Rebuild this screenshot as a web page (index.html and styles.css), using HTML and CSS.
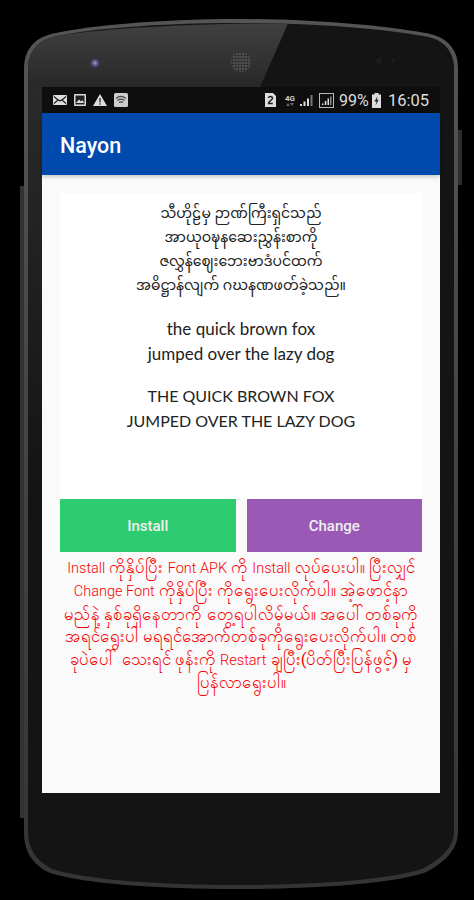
FILE: index.html
```html
<!DOCTYPE html>
<html lang="my">
<head>
<meta charset="utf-8">
<title>Nayon</title>
<link rel="stylesheet" href="styles.css">
</head>
<body>
<div class="phone">
  <svg class="shell" width="474" height="900" viewBox="0 0 474 900" aria-hidden="true">
    <defs>
      <linearGradient id="glare" x1="0" y1="0" x2="0" y2="1"><stop offset="0" stop-color="#404040"/><stop offset="1" stop-color="#282828"/></linearGradient>
      <linearGradient id="rim" x1="0" y1="0" x2="0" y2="1"><stop offset="0" stop-color="#555"/><stop offset=".5" stop-color="#444"/><stop offset="1" stop-color="#343434"/></linearGradient>
      <linearGradient id="band" x1="0" y1="0" x2="0" y2="1"><stop offset="0" stop-color="#2a2a2a"/><stop offset="1" stop-color="#141414"/></linearGradient>
      <radialGradient id="lens"><stop offset="0" stop-color="#a0a0c8"/><stop offset=".55" stop-color="#44446c"/><stop offset="1" stop-color="#2a2a30"/></radialGradient>
      <pattern id="mesh" width="3" height="3" patternUnits="userSpaceOnUse"><rect width="3" height="3" fill="#4a4a4a"/><circle cx="1.5" cy="1.5" r=".8" fill="#1c1c1c"/></pattern>
    </defs>
    <rect x="458" y="130" width="4" height="55" fill="#2c2c2c"/>
    <rect x="20" y="186" width="5" height="632" fill="#333"/>
    <path d="M237 19C160 19 80 26 48 35C32 40 24 52 24 68V832C24 850 31 864 50 873C85 884 160 889 237 889C314 889 389 884 424 873C443 864 458 850 458 832V68C458 52 450 40 434 35C394 26 314 19 237 19Z" fill="url(#rim)"/>
    <path d="M237 23C160 23 82 29 50 38C36 42 28 54 28 68V832C28 848 35 860 52 869C87 880 160 885 237 885C314 885 387 880 422 869C439 860 454 848 454 832V68C454 54 446 42 432 38C392 29 314 23 237 23Z" fill="#141414"/>
    <rect x="28" y="87" width="14" height="400" fill="url(#band)"/>
    <path d="M288 23.500C200 23 82 29 50 38C36 42 28 54 28 68V87H260Z" fill="url(#glare)"/>
    <circle cx="95" cy="63" r="6" fill="url(#lens)"/>
    <circle cx="241" cy="62" r="10.500" fill="url(#mesh)" stroke="#333" stroke-width="1"/>
    <circle cx="379" cy="61" r="3" fill="#1d1d1d"/><circle cx="393" cy="61" r="2" fill="#1d1d1d"/>
  </svg>
  <div class="screen">
    <header class="statusbar">
      <div class="status-left">
        <svg width="14" height="10" viewBox="0 0 14 10"><rect width="14" height="10" rx="1" fill="#ddd"/><path d="M1 1.500L5 5L1 8.500M13 1.500L9 5L13 8.500M4 4L7 6L10 4" fill="none" stroke="#222" stroke-width="1.200"/></svg>
        <svg width="12" height="12" viewBox="0 0 12 12"><rect width="12" height="12" rx="1" fill="#ddd"/><rect x="1.500" y="1.500" width="9" height="9" fill="#222"/><path d="M2 9L5 5.500L7 7.500L8.500 6L10 9Z" fill="#ddd"/></svg>
        <svg width="14" height="12" viewBox="0 0 14 12"><path d="M7 0L14 12H0Z" fill="#ddd"/><rect x="6.300" y="4" width="1.400" height="4.500" fill="#333"/><rect x="6.300" y="9.300" width="1.400" height="1.400" fill="#333"/></svg>
        <svg width="14" height="14" viewBox="0 0 14 14"><rect width="14" height="14" rx="1.500" fill="#ccc"/><path d="M2 5.500C5 3 9 3 12 5.500M3.500 7.500C5.500 6 8.500 6 10.500 7.500M5 9.500C6.200 8.700 7.800 8.700 9 9.500" fill="none" stroke="#444" stroke-width="1.100"/></svg>
      </div>
      <div class="status-right">
        <svg class="sim" width="11" height="14" viewBox="0 0 11 14"><path d="M0 0H8L11 3V14H0Z" fill="#ddd"/><path d="M3.500 5C3.800 3 7.500 3 7.500 5.200C7.500 7 3.500 8 3.500 10.500H7.800" fill="none" stroke="#222" stroke-width="1.500"/></svg>
        <span class="net">4G<svg width="8" height="3" viewBox="0 0 8 3" class="net-arrows"><path d="M2 0L4 3H0ZM6 3L4 0H8Z" fill="#666"/></svg></span>
        <svg class="bars" width="13" height="12" viewBox="0 0 13 12"><path d="M0 12V10H2V12ZM3.500 12V7.500H5.500V12ZM7 12V4.500H9V12Z" fill="#ddd"/><path d="M10.500 12V1H12.500V12Z" fill="#777"/></svg>
        <svg class="box" width="15" height="15" viewBox="0 0 15 15"><rect x=".5" y=".5" width="14" height="14" fill="none" stroke="#bbb"/><path d="M3 12V10.500H4.500V12ZM5.800 12V8H7.300V12ZM8.500 12V5.500H10V12Z" fill="#ddd"/><path d="M11 12V3.500H12.500V12Z" fill="#888"/></svg>
        <span class="pct">99%</span>
        <svg class="bat" width="9" height="15" viewBox="0 0 9 15"><path d="M2.500 0H6.500V1.500H9V15H0V1.500H2.500Z" fill="#ddd"/><path d="M5.500 3L2.500 8.500H4.500L3.500 12.500L6.800 6.800H4.800Z" fill="#222"/></svg>
        <span class="clock">16:05</span>
      </div>
    </header>
    <div class="appbar">Nayon</div>
    <main class="content">
      <section class="card">
        <p class="mm">သီဟိုဠ်မှ ဉာဏ်ကြီးရှင်သည်<br>အာယုဝဍ္ဎနဆေးညွှန်းစာကို<br>ဇလွှန်ဈေးဘေးဗာဒံပင်ထက်<br>အဓိဋ္ဌာန်လျက် ဂဃနဏဖတ်ခဲ့သည်။</p>
        <p class="latin">the quick brown fox<br>jumped over the lazy dog</p>
        <p class="latin caps">THE QUICK BROWN FOX<br>JUMPED OVER THE LAZY DOG</p>
      </section>
      <div class="actions">
        <button class="btn install">Install</button>
        <button class="btn change">Change</button>
      </div>
      <p class="note"><span class="lat">Install</span> ကိုနှိပ်ပြီး <span class="lat">Font APK</span> ကို <span class="lat">Install</span> လုပ်ပေးပါ။ ပြီးလျှင်<br><span class="lat">Change Font</span> ကိုနှိပ်ပြီး ကိုရွေးပေးလိုက်ပါ။ အဲ့ဖောင့်နာ<br>မည်နဲ့ နှစ်ခုရှိနေတာကို တွေ့ရပါလိမ့်မယ်။ အပေါ်တစ်ခုကို<br>အရင်ရွေးပါ မရရင်အောက်တစ်ခုကိုရွေးပေးလိုက်ပါ။ တစ်<br>ခုပဲပေါ် သေးရင် ဖုန်းကို <span class="lat">Restart</span> ချပြီး(ပိတ်ပြီးပြန်ဖွင့်) မှ<br>ပြန်လာရွေးပါ။</p>
    </main>
  </div>
</div>
</body>
</html>
```
FILE: styles.css
```css
html, body { margin: 0; padding: 0; background: #000; }
body { width: 474px; height: 900px; overflow: hidden; font-family: Roboto, "Noto Sans", sans-serif; }
.phone { position: relative; width: 474px; height: 900px; box-sizing: border-box; padding: 87px 34px 107px 42px; }
.shell { position: absolute; left: 0; top: 0; }
.screen { position: relative; height: 706px; display: flex; flex-direction: column; }
.statusbar { height: 26px; flex: none; background: #0e0e0e; display: flex; justify-content: space-between; align-items: center; padding: 0 12px 0 11px; color: #ddd; }
.status-left { display: flex; align-items: center; gap: 7px; }
.status-right { display: flex; align-items: center; }
.net { display: flex; flex-direction: column; align-items: center; font-size: 8px; font-weight: 700; line-height: 8px; color: #ccc; width: 10px; margin-left: 9px; }
.net-arrows { display: block; }
.bars { margin-left: 5px; }
.box { margin-left: 6px; }
.pct { font-size: 16px; width: 29px; white-space: nowrap; color: #ddd; margin-left: 5px; }
.bat { margin-left: 4px; }
.clock { font-size: 16.500px; width: 40px; white-space: nowrap; color: #ddd; margin-left: 7px; }
.appbar { height: 62px; flex: none; box-sizing: border-box; background: #0049ad; color: #fff; font-size: 21.500px; font-weight: 500; display: flex; align-items: center; padding: 2px 0 0 18px; box-shadow: 0 2px 4px rgba(0,0,0,.2); position: relative; }
.content { flex: 1; background: #fafafa; padding: 18px 18px 0; }
.card { background: #fff; height: 306px; text-align: center; color: #222; overflow: hidden; padding-top: 10px; box-sizing: border-box; }
.card p { margin: 0; }
.mm { font-size: 14px; line-height: 24px; font-family: "Noto Sans Myanmar", "Noto Sans", sans-serif; }
.latin { font-family: Lato, sans-serif; font-size: 17px; line-height: 24.500px; margin-top: 18px !important; }
.caps { font-size: 16px; }
.actions { display: flex; gap: 11px; }
.btn { flex: 1; height: 53px; border: 0; color: #efefef; font: 500 15px Roboto, sans-serif; }
.install { background: #2ecc71; }
.change { background: #9b59b6; }
.note { margin: 5px -4px 0; color: #f70000; text-align: center; font-size: 16.700px; line-height: 22.400px; white-space: nowrap; }
.lat { font-size: 14.500px; font-weight: 300; }
```
